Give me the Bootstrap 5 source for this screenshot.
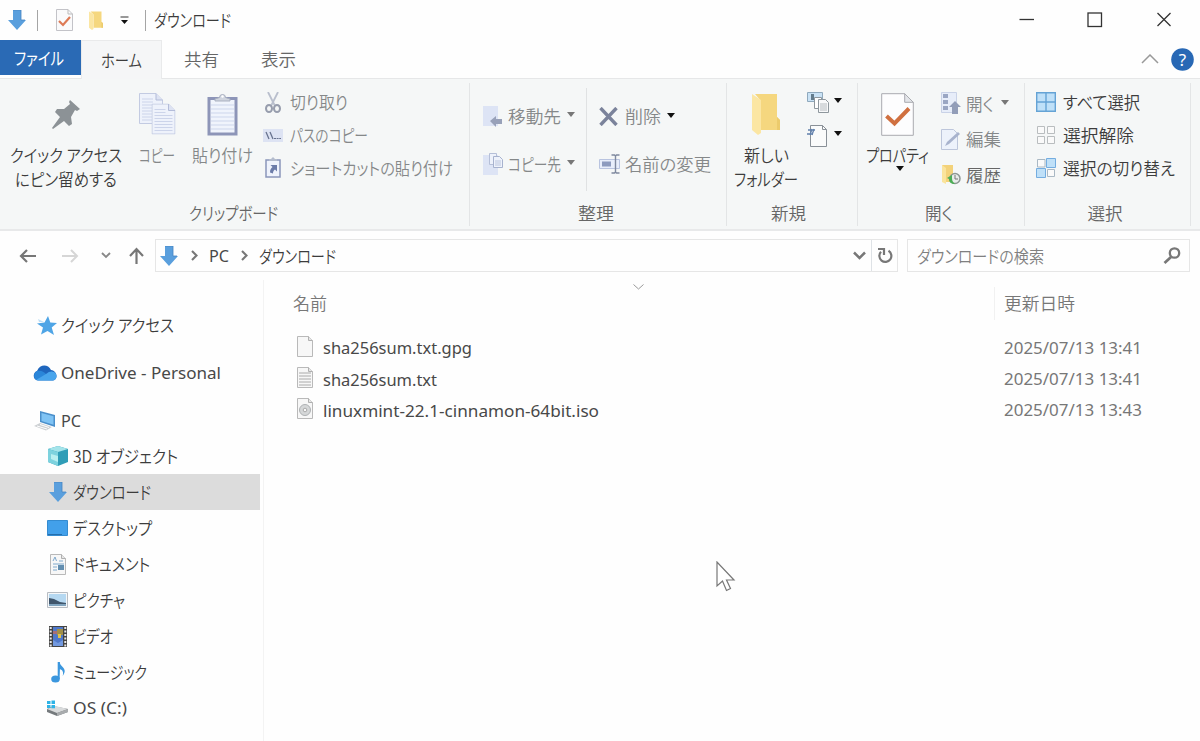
<!DOCTYPE html>
<html lang="ja">
<head>
<meta charset="utf-8">
<title>ダウンロード</title>
<meta name="viewport" content="width=device-width, initial-scale=1">
<link href="https://cdn.jsdelivr.net/npm/bootstrap@5.3.0/dist/css/bootstrap.min.css" rel="stylesheet">
<style>
body{font-family:"Noto Sans","Noto Sans CJK JP",sans-serif;font-size:17.5px;line-height:24px;color:#3c3c3c;background:#fefefe;height:741px;overflow:hidden}
svg{display:block;flex:none}
.t{display:inline-block;white-space:nowrap;flex:none;text-align:left;font-family:"Noto Sans CJK JP",sans-serif;font-feature-settings:"palt";font-weight:350}
.t span{display:inline-block;transform-origin:0 50%}
.lat{font-family:"Noto Sans",sans-serif;font-weight:400;font-size:16.6px;color:#484848}
.titlebar{height:40px}
.vbar{width:1px;height:21px;background:#a5a5a5}
.tabs{height:39px;border-bottom:1px solid #e6e7e8}
.tab-file{width:81px;height:35px;background:#2a6ab5;color:#fff;padding-left:14px}
.tab-on{width:81px;height:39px;background:#f5f6f7;border:1px solid #e9eaeb;border-bottom:0;padding-left:19px}
.tab-file .t{font-weight:400}
.ribbon{height:152px;background:#f5f7f7;border-bottom:2px solid #e8e9ea}
.grp{border-right:1px solid #e3e5e6;margin:4px 0 3px}
.grp-body{height:118px}
.grp-label{height:25px;color:#666}
.g1{width:470px}.g2{width:257px}.g3{width:131px}.g4{width:167px}.g5{width:166px}
.big{padding-top:10px}
.big .ic{height:42px;margin-bottom:8px}
.dis{color:#858889}
.cmds{padding-top:3px}
.cmd{height:32.7px}
.ico{width:20px;display:flex;justify-content:center;flex:none}
.caret{width:0;height:0;border:4.5px solid transparent;border-top:5px solid #111;border-bottom:0;flex:none}
.caret.g{border-top-color:#777}
.inner-sep{width:1px;height:103px;margin-top:5px;background:#e0e2e3}
.navrow{height:49px}
.box{height:33px;border:1px solid #e6e6e6;background:#fefefe}
.side{width:264px;border-right:1px solid #f3f3f3;padding-top:21px}
.side-top{height:48px}
.child{height:36px;padding-left:47px;width:260px}
.child.on{background:#dcdcdc}
.child .ico{width:21px;margin-right:5px}
.side-top .ico{width:24px;margin-right:4px}
.frow{height:31.4px}
.date{color:#777}
.cursor{position:absolute;left:716px;top:561px}
</style>
</head>
<body class="d-flex flex-column position-relative">
<svg width="0" height="0" class="position-absolute">
<defs>
<symbol id="down" viewBox="0 0 18 20"><path d="M5 0h8v10h5L9 20 0 10h5z" fill="#5a9fdd"/><path d="M5 0h8v10h4" fill="none" stroke="#4583c2" stroke-width=".8"/></symbol>
<symbol id="prop" viewBox="0 0 33 43"><path d="M.7.7h23l8.6 8.6v33H.7z" fill="#fdfdfe" stroke="#a9abb0"/><path d="M23.700.7v8.600h8.600z" fill="#e4e6ea" stroke="#a9abb0"/><path d="M5.500 23l8 7.500L28 15.500" fill="none" stroke="#d07040" stroke-width="4"/></symbol>
<symbol id="folder" viewBox="0 0 28 42"><path d="M3 1h22v23l3 3v10H9V8z" fill="#f5d77f"/><path d="M0 1l9 6v33l-3 2-6-5z" fill="#fbe6a3"/><path d="M25 24l3 3v10h-3z" fill="#eccb6c"/></symbol>
<symbol id="lines" viewBox="0 0 24 31"><path d="M.5.500H17L23.500 7v23.500H.500z" fill="#eef2fb" stroke="#c3cbe2"/><path d="M17 .5V7h6.500" fill="#dde3f3" stroke="#b3bcd9"/><path d="M3 6h11M3 9h11M3 12h18M3 15h18M3 18h18M3 21h18M3 24h18M3 27h18" stroke="#ccd4ea"/></symbol>
<symbol id="page" viewBox="0 0 16 21"><path d="M.5.500h11l4 4v16H.500z" fill="#f7f7f7" stroke="#b9b9b9"/><path d="M11.500.5v4h4" fill="#e6e6e6" stroke="#b0b0b0"/></symbol>
</defs>
</svg>

<header class="titlebar d-flex align-items-center justify-content-between">
  <div class="d-flex align-items-center" style="margin-left:8px">
    <svg width="18" height="20"><use href="#down"/></svg>
    <div class="vbar" style="margin-left:11px"></div>
    <svg width="17" height="22" style="margin-left:18px" viewBox="0 0 17 22"><path d="M.500.500H12l4.500 4.500v16.500H.500z" fill="#fafafb" stroke="#c3c3c8"/><path d="M12 .5V5h4.500" fill="none" stroke="#bbb"/><path d="M3 12l4 4 7-8" fill="none" stroke="#dd7a55" stroke-width="2.200"/></svg>
    <svg width="14" height="19" style="margin-left:16px" viewBox="0 0 28 42" preserveAspectRatio="none"><use href="#folder" width="28" height="42"/></svg>
    <svg width="9" height="9" style="margin-left:17px" viewBox="0 0 9 9"><path d="M.5 1h8" stroke="#333"/><path d="M1 4h7L4.500 8z" fill="#111"/></svg>
    <div class="vbar" style="margin-left:16px"></div>
    <span class="t" data-w="77" style="margin-left:8px">ダウンロード</span>
  </div>
  <div class="d-flex align-items-center" style="margin-right:28px">
    <svg width="16" height="16" style="margin-right:52px"><path d="M.5 7.500h14.500" stroke="#333" stroke-width="1.300"/></svg>
    <svg width="16" height="16" style="margin-right:53px"><rect x="1" y="1" width="13.500" height="13.500" fill="none" stroke="#333" stroke-width="1.300"/></svg>
    <svg width="16" height="16"><path d="M1.500 1l13 13M14.500 1l-13 13" stroke="#333" stroke-width="1.300"/></svg>
  </div>
</header>

<nav class="tabs d-flex align-items-start">
  <div class="tab-file d-flex align-items-center"><span class="t" data-w="50">ファイル</span></div>
  <div class="tab-on d-flex align-items-center"><span class="t" data-w="41">ホーム</span></div>
  <div class="d-flex align-items-center h-100" style="margin-left:22px;color:#666;gap:42px"><span class="t" data-w="35">共有</span><span class="t" data-w="35">表示</span></div>
  <div class="d-flex align-items-center ms-auto h-100" style="margin-right:6px">
    <svg width="18" height="10" style="margin-right:12px"><path d="M1 9l8-8 8 8" fill="none" stroke="#999" stroke-width="1.500"/></svg>
    <svg width="23" height="23"><circle cx="11.500" cy="11.500" r="11.300" fill="#2868b5"/><text x="11.500" y="17.500" text-anchor="middle" font-size="17" fill="#fff" font-family="Noto Sans">?</text></svg>
  </div>
</nav>

<section class="ribbon d-flex">
  <div class="grp g1">
    <div class="grp-body d-flex">
      <div class="big d-flex flex-column align-items-center" style="width:132px">
        <div class="ic d-flex align-items-center"><svg width="30" height="31" viewBox="0 0 30 31"><path d="M19 1l10 9-3 2-2-1-4 7 1 7-3 2-5-5L2 30l-1-1 8-11-5-5 2-3h7l6-5-1-2z" fill="#8c9296"/></svg></div>
        <span class="t" data-w="112">クイック アクセス</span><span class="t" data-w="102">にピン留めする</span>
      </div>
      <div class="big dis d-flex flex-column align-items-center" style="width:50px">
        <div class="ic"><svg width="37" height="42"><use href="#lines" width="24" height="31"/><use href="#lines" x="12.500" y="10.500" width="24" height="31"/></svg></div>
        <span class="t" data-w="36">コピー</span>
      </div>
      <div class="big dis d-flex flex-column align-items-center" style="width:81px">
        <div class="ic"><svg width="31" height="43" viewBox="0 0 31 43"><path d="M2 5.500h27V41H2z" fill="#f0f4fc" stroke="#8d95b8" stroke-width="3"/><path d="M4 12h23M4 16h23M4 20h23M4 24h23M4 28h23M4 32h23M4 36h23" stroke="#cdd6ec"/><path d="M8 8V6l4.500-1.500a3 3 0 016 0L23 6v2z" fill="#cfd4de" stroke="#a9b0c0"/><circle cx="15.500" cy="3.500" r="1.200" fill="#fff"/></svg></div>
        <span class="t" data-w="61">貼り付け</span>
      </div>
      <div class="cmds dis">
        <div class="cmd d-flex align-items-center"><span class="ico" style="margin-right:7px"><svg width="16" height="21" viewBox="0 0 16 21"><path d="M3 0l6.500 13M13 0L6.500 13" stroke="#b9bfcd" stroke-width="1.800"/><ellipse cx="4" cy="16.500" rx="3" ry="3.500" fill="none" stroke="#979dad" stroke-width="2"/><ellipse cx="12" cy="16.500" rx="3" ry="3.500" fill="none" stroke="#979dad" stroke-width="2"/></svg></span><span class="t" data-w="58">切り取り</span></div>
        <div class="cmd d-flex align-items-center"><span class="ico" style="margin-right:7px"><svg width="20" height="13"><path d="M0 0h20v13H0z" fill="#dde3f3"/><path d="M3 3l3 7M7 3l3 7" stroke="#68738f" stroke-width="1.300"/><path d="M11 9.500h7" stroke="#68738f" stroke-dasharray="2 .6"/></svg></span><span class="t" data-w="78">パスのコピー</span></div>
        <div class="cmd d-flex align-items-center"><span class="ico" style="margin-right:7px"><svg width="16" height="21"><path d="M1 3h14v17H1z" fill="#eff3fc" stroke="#8b96ba" stroke-width="1.500"/><path d="M4 4V2h2l2-2 2 2h2v2z" fill="#b4bccd"/><path d="M5.500 8H12v6.500l-2-2c-1.500 1-2 2-2 4l-3-1c0-3 1-4 2.500-5.500z" fill="#6c7ca9"/></svg></span><span class="t" data-w="163">ショートカットの貼り付け</span></div>
      </div>
    </div>
    <div class="grp-label text-center" style="padding-right:3px"><span class="t" data-w="89">クリップボード</span></div>
  </div>

  <div class="grp g2">
    <div class="grp-body d-flex dis">
      <div style="width:116px;padding:9px 0 0 12.500px">
        <div class="d-flex align-items-center" style="height:48px"><svg width="20" height="21" style="margin-right:5px"><path d="M0 0h15v20H0z" fill="#dde4f5"/><path d="M7 15l6-5v3h6v5h-6v3z" fill="#98a1b9"/></svg><span class="t" data-w="53">移動先</span><i class="caret g" style="margin:-4px 0 0 6px"></i></div>
        <div class="d-flex align-items-center" style="height:48px"><svg width="20" height="23"><path d="M0 2h15v20H0z" fill="#dde4f5"/><path d="M6.500.500h7v11h-7z" fill="#eef2fb" stroke="#b5bfd8"/><path d="M10.500 3.500h6l3 3v8h-9z" fill="#eef2fb" stroke="#a7b2ce"/><path d="M12 8h6M12 10h6M12 12h6" stroke="#bcc6de"/></svg><span class="t" data-w="53" style="margin-left:5px">コピー先</span><i class="caret g" style="margin:-4px 0 0 6px"></i></div>
      </div>
      <div class="inner-sep"></div>
      <div style="padding:9px 0 0 12px">
        <div class="d-flex align-items-center" style="height:48px"><svg width="20" height="19" style="margin-right:6px"><path d="M1.500 1l16 17M17.500 1l-16 17" stroke="#7b839b" stroke-width="3.400"/></svg><span class="t" data-w="36">削除</span><i class="caret" style="margin:-2px 0 0 6px"></i></div>
        <div class="d-flex align-items-center" style="height:48px"><svg width="21" height="20" style="margin-right:5px"><path d="M.5 5.500h20v9H.500z" fill="#e8eefb" stroke="#b9c4e0"/><path d="M3 7.500h9v5H3z" fill="#8d9bbf"/><path d="M12.500 1h3l1 1 1-1h3M16.500 2v16M12.500 19h3l1-1 1 1h3" fill="none" stroke="#7f899f" stroke-width="1.400"/></svg><span class="t" data-w="86">名前の変更</span></div>
      </div>
    </div>
    <div class="grp-label text-center" style="padding-right:5px"><span class="t" data-w="36">整理</span></div>
  </div>

  <div class="grp g3">
    <div class="grp-body d-flex">
      <div class="big d-flex flex-column align-items-center" style="width:78px">
        <div class="ic"><svg width="28" height="42"><use href="#folder"/></svg></div>
        <span class="t" data-w="45">新しい</span><span class="t" data-w="64">フォルダー</span>
      </div>
      <div class="cmds" style="padding-left:2px">
        <div class="cmd d-flex align-items-center"><svg width="23" height="23"><path d="M.5 1.500h15v9H.500z" fill="#c9e2f5" stroke="#8fa9bd"/><path d="M4 3h3v6H4z" fill="#647c8c"/><path d="M7.500 6.500h7v11h-7z" fill="#fff" stroke="#8e979d"/><path d="M11.500 8.500h7l3 3v10h-10z" fill="#f8f9fa" stroke="#8e979d"/><path d="M13 13h7M13 15h7M13 17h7M13 19h7" stroke="#b6bcc0"/></svg><i class="caret" style="margin:-3px 0 0 4px"></i></div>
        <div class="cmd d-flex align-items-center"><svg width="23" height="23"><path d="M3.500 1.500h12l4 4v17h-16z" fill="#fafbfb" stroke="#899097"/><path d="M15.500 1.500v4h4" fill="none" stroke="#899097"/><path d="M1 6h7M0 10h6M3 11l2-6M5 11l2-6" stroke="#6281ad" stroke-width="1.300"/></svg><i class="caret" style="margin:-3px 0 0 4px"></i></div>
      </div>
    </div>
    <div class="grp-label text-center" style="padding-right:7px"><span class="t" data-w="35">新規</span></div>
  </div>

  <div class="grp g4">
    <div class="grp-body d-flex">
      <div class="big d-flex flex-column align-items-center" style="width:79px">
        <div class="ic"><svg width="33" height="43"><use href="#prop"/></svg></div>
        <span class="t" data-w="63">プロパティ</span><i class="caret" style="margin:-1px 0 0 5px"></i>
      </div>
      <div style="padding:3px 0 0 4px">
        <div class="d-flex align-items-center dis" style="height:35.500px"><svg width="20" height="23" style="margin-right:5px"><path d="M.5.500h15v20H.500z" fill="#e7edf9" stroke="#c9d2e7"/><path d="M2 2h5v4H2zM2 8h5v4H2zM2 14h5v4H2z" fill="#9aa6c3"/><path d="M14 9l6 6h-3v7h-6v-7H8z" fill="#929db8"/></svg><span class="t" data-w="28">開く</span><i class="caret g" style="margin:-3px 0 0 7px"></i></div>
        <div class="d-flex align-items-center dis" style="height:35.500px"><svg width="20" height="21" style="margin-right:5px"><path d="M.5.500h12l4 4v16H.500z" fill="#edf2fb" stroke="#bdc6db"/><path d="M4 17l2-4L17 3l2 2L8 15z" fill="#a8b3cd"/></svg><span class="t" data-w="35">編集</span></div>
        <div class="d-flex align-items-center" style="height:35.500px;color:#666"><svg width="20" height="20" style="margin-right:5px"><path d="M1 0h11v17H4z" fill="#f3d27a"/><path d="M1 0l4 3v16l-4-2z" fill="#fae49d"/><circle cx="14" cy="13.500" r="5" fill="#e9eceb" stroke="#8d9794" stroke-width="1.500"/><path d="M14 10v4h3" fill="none" stroke="#777"/><path d="M6 13l5-3v3c0 3 1 4 3 6-4 0-6-2-6-5z" fill="#4cae55"/></svg><span class="t" data-w="35">履歴</span></div>
      </div>
    </div>
    <div class="grp-label text-center" style="padding-right:4px"><span class="t" data-w="28">開く</span></div>
  </div>

  <div class="grp g5">
    <div class="grp-body">
      <div class="cmds" style="padding-left:11px">
        <div class="cmd d-flex align-items-center"><svg width="20" height="20" style="margin-right:7px"><path d="M.7.700h18.600v18.600H.700zM10 .7v18.600M.7 10h18.600" fill="#bfe0f8" stroke="#65a3d5" stroke-width="1.400"/></svg><span class="t" data-w="77">すべて選択</span></div>
        <div class="cmd d-flex align-items-center"><svg width="20" height="20" style="margin-right:7px"><path d="M1.500 1.500H8.500V8.500H1.500zM11.500 1.500H18.500V8.500h-7zM1.500 11.500H8.500V18.500H1.500zM11.500 11.500H18.500V18.500h-7z" fill="#fafafa" stroke="#b9bdbf"/></svg><span class="t" data-w="71">選択解除</span></div>
        <div class="cmd d-flex align-items-center"><svg width="20" height="20" style="margin-right:7px"><path d="M1.500 1.500H9V9H1.500zM11.500 11.500H18.500V18.500h-7z" fill="#fafafa" stroke="#a9b8c4"/><path d="M10.500.500h9v9h-9zM.5 10.500h9v9h-9z" fill="#bfe0f8" stroke="#74ade0"/></svg><span class="t" data-w="112">選択の切り替え</span></div>
      </div>
    </div>
    <div class="grp-label text-center" style="padding-right:5px"><span class="t" data-w="35">選択</span></div>
  </div>
</section>

<div class="navrow d-flex align-items-center">
  <div class="d-flex align-items-center" style="width:155px;padding-left:19px">
    <svg width="17" height="14" style="margin-right:26px"><path d="M17 7H2M8 1L2 7l6 6" fill="none" stroke="#777" stroke-width="2.200"/></svg>
    <svg width="17" height="14" style="margin-right:22px"><path d="M0 7h15M9 1l6 6-6 6" fill="none" stroke="#d6d6d6" stroke-width="2"/></svg>
    <svg width="10" height="7" style="margin-right:18px"><path d="M1 1l4 4 4-4" fill="none" stroke="#888" stroke-width="1.900"/></svg>
    <svg width="15" height="17"><path d="M7.500 17V2M1 9l6.500-7L14 9" fill="none" stroke="#777" stroke-width="2.200"/></svg>
  </div>
  <div class="box d-flex align-items-center" style="width:743px;padding-left:4px">
    <svg width="18" height="20" style="margin-right:13px"><use href="#down"/></svg>
    <svg width="7" height="11" style="margin-right:11px"><path d="M1 1l4.500 4.500L1 10" fill="none" stroke="#777" stroke-width="2.100"/></svg>
    <span class="t lat" data-w="20">PC</span>
    <svg width="7" height="11" style="margin:0 11px 0 12px"><path d="M1 1l4.500 4.500L1 10" fill="none" stroke="#777" stroke-width="2.100"/></svg>
    <span class="t" data-w="77">ダウンロード</span>
    <svg width="13" height="9" class="ms-auto" style="margin-right:5px"><path d="M1 1.500l5.500 5.500L12 1.500" fill="none" stroke="#777" stroke-width="2.500"/></svg>
    <div class="border-start h-100 d-flex align-items-center justify-content-center" style="width:26px"><svg width="16" height="17" viewBox="0 0 16 17"><path d="M11.500 3.800a6 6 0 11-7.500 1" fill="none" stroke="#777" stroke-width="2.200"/><path d="M1 2h6v6" fill="none" stroke="#777" stroke-width="2.200"/></svg></div>
  </div>
  <div class="box d-flex align-items-center justify-content-between" style="width:283px;margin-left:9px;padding:0 8px 0 9px;color:#808080">
    <span class="t" data-w="127">ダウンロードの検索</span>
    <svg width="18" height="17"><circle cx="11.500" cy="6" r="4.700" fill="none" stroke="#777" stroke-width="2.300"/><path d="M8 10l-6.500 6" stroke="#777" stroke-width="2.700"/></svg>
  </div>
</div>

<main class="d-flex flex-grow-1">
  <aside class="side">
    <div class="side-top d-flex align-items-center" style="padding-left:33px"><span class="ico justify-content-end"><svg width="20" height="19" viewBox="0 0 20 19"><path d="M11 0l2.300 6.500L20 7l-5.300 4.500L17 19l-6.500-4L4 18.500l2-7L0 7.500l7.500-1z" fill="#4fa5e6"/><path d="M1 3l6 3-5 0z" fill="#bfe0f6"/></svg></span><span class="t" data-w="113">クイック アクセス</span></div>
    <div class="side-top d-flex align-items-center" style="padding-left:33px"><span class="ico"><svg width="24" height="16" viewBox="0 0 24 16"><path d="M5 15.500C0 15.500-1 8 4 6 7-1 15-1 18 5c7 1 7 10 2 10.500z" fill="#1f66bd"/><path d="M4 6c4-1 7 1 9 3l8 6H5C0 15 0 8 4 6z" fill="#2a86d9"/><path d="M3 15l10-6c3-3 6-3 8-2 4 2 3 8-1 8.500H5z" fill="#49a5ec"/></svg></span><span class="t lat" data-w="160">OneDrive - Personal</span></div>
    <div class="d-flex align-items-center side-top" style="height:41px;padding:6px 0 0 33px"><span class="ico"><svg width="22" height="20" viewBox="0 0 22 20"><path d="M6 0l15 4v12L6 11z" fill="#4a8fcb"/><path d="M7.500 2l12 3.200v8.500l-12-3.700z" fill="#7fc3f4"/><path d="M0 15l6-3 12 4-6 3.500z" fill="#cdd0d3"/><path d="M3 15l10 3M6 13.500l9 3" stroke="#fff"/></svg></span><span class="t lat" data-w="20">PC</span></div>
    <div class="child d-flex align-items-center"><span class="ico"><svg width="20" height="20" viewBox="0 0 20 20"><path d="M10 0l10 3v13l-10 4-10-4V3z" fill="#2f9db7"/><path d="M10 0l10 3-10 3L0 3z" fill="#a4e4ea"/><path d="M0 3l10 3v14L0 16z" fill="#7dd2de"/><path d="M3 8l7 2v6l-7-3z" fill="#b9eff0"/></svg></span><span class="t" data-w="105">3D オブジェクト</span></div>
    <div class="child on d-flex align-items-center"><span class="ico"><svg width="18" height="20"><use href="#down"/></svg></span><span class="t" data-w="78">ダウンロード</span></div>
    <div class="child d-flex align-items-center"><span class="ico"><svg width="21" height="16"><path d="M.5.500h20v15H.500z" fill="#42a0ea" stroke="#348bd0"/><path d="M1 14.500h14" stroke="#246eac"/></svg></span><span class="t" data-w="79">デスクトップ</span></div>
    <div class="child d-flex align-items-center"><span class="ico"><svg width="16" height="21"><use href="#page"/><path d="M3 7l2-4 1.500 4M9 7h4M3 10h11M3 13h4M3 16h4" fill="none" stroke="#7fa9cd"/><path d="M8 11h6v5H8z" fill="#628eb0"/></svg></span><span class="t" data-w="77">ドキュメント</span></div>
    <div class="child d-flex align-items-center"><span class="ico"><svg width="21" height="16"><path d="M.5.500h20v15H.500z" fill="#f5f7f9" stroke="#b7bcc2"/><path d="M2 2h17v12H2z" fill="#b5d8f1"/><path d="M2 6l5 1 6 3 6 1v1H2z" fill="#40566c"/><path d="M2 12h17v2H2z" fill="#7fa3be"/></svg></span><span class="t" data-w="52">ピクチャ</span></div>
    <div class="child d-flex align-items-center"><span class="ico"><svg width="18" height="21"><path d="M0 0h18v21H0z" fill="#444"/><path d="M4 1h10v19H4z" fill="#4f78ca"/><path d="M8 3h6v6H8z" fill="#a1904a"/><path d="M4 5h4v3H4z" fill="#a76f7a"/><path d="M9 8h3v4H9z" fill="#e1c34a"/><path d="M4 14l5 3 5-3v6H4z" fill="#7299df"/><path d="M1.700 1v20M16.300 1v20" stroke="#e8e8e8" stroke-width="2" stroke-dasharray="2 1.500"/></svg></span><span class="t" data-w="40">ビデオ</span></div>
    <div class="child d-flex align-items-center"><span class="ico"><svg width="14" height="22"><ellipse cx="4.500" cy="18" rx="4.300" ry="3.500" fill="#3b97de"/><path d="M7.700 18V1h1c0 4 5 5 5 9 0 2-1 3-2 5 1-4 0-6-3-7" fill="#3b97de"/><path d="M7.700 18V1" stroke="#3b97de" stroke-width="2"/></svg></span><span class="t" data-w="74">ミュージック</span></div>
    <div class="child d-flex align-items-center"><span class="ico"><svg width="21" height="16" viewBox="0 0 21 16"><path d="M0 9l6-3 15 3v3l-11 4L0 12z" fill="#757a7d"/><path d="M0 9l8-3 13 3-11 4z" fill="#d9dbdc"/><path d="M10 13l11-4v3l-11 4z" fill="#a9acae"/><path d="M0 1h3.500v3H0zM4.500.600H8V4H4.500zM0 5h3.500v3H0zM4.500 5H8v3.300H4.500z" fill="#2eb3e6"/></svg></span><span class="t lat" data-w="54">OS (C:)</span></div>
  </aside>

  <section class="flex-grow-1">
    <div class="d-flex" style="height:48px;color:#777">
      <div class="d-flex justify-content-between" style="width:731px;padding-left:29px;border-right:1px solid #f1f1f1;margin-top:7px;height:33px">
        <span class="t" data-w="34" style="margin-top:4px">名前</span>
        <svg width="11" height="6" style="margin:-3px 350px 0 0"><path d="M.5.500l5 4.500 5-4.500" fill="none" stroke="#999"/></svg>
      </div>
      <span class="t" data-w="71" style="margin:11px 0 0 9px">更新日時</span>
    </div>
    <div style="padding:4px 0 0 33px">
      <div class="frow d-flex align-items-center"><svg width="16" height="21" style="margin:-3px 10px 0 0"><use href="#page"/></svg><div style="width:681px"><span class="t lat" data-w="149">sha256sum.txt.gpg</span></div><span class="t lat date" data-w="138">2025/07/13 13:41</span></div>
      <div class="frow d-flex align-items-center"><svg width="16" height="21" style="margin:-3px 10px 0 0"><use href="#page"/><path d="M2 6h12M2 9h12M2 12h12M2 15h12M2 18h12" stroke="#aaa"/></svg><div style="width:681px"><span class="t lat" data-w="114">sha256sum.txt</span></div><span class="t lat date" data-w="138">2025/07/13 13:41</span></div>
      <div class="frow d-flex align-items-center"><svg width="16" height="21" style="margin:-3px 10px 0 0"><use href="#page"/><circle cx="8" cy="12" r="5.500" fill="#d5d7d8" stroke="#aeb1b3"/><circle cx="8" cy="12" r="1.800" fill="#f8f8f8" stroke="#aaa"/></svg><div style="width:681px"><span class="t lat" data-w="276">linuxmint-22.1-cinnamon-64bit.iso</span></div><span class="t lat date" data-w="138">2025/07/13 13:43</span></div>
    </div>
  </section>
</main>
<svg class="cursor" width="20" height="31" viewBox="0 0 20 31"><path d="M1 1v24l5.500-5 4 9.500 4-2-4-8.500H18z" fill="#fff" stroke="#777" stroke-width="1.200"/></svg>

<script src="https://cdn.jsdelivr.net/npm/bootstrap@5.3.0/dist/js/bootstrap.bundle.min.js"></script>
<script>
// Condense each label to its set width, as a narrow UI kana face would.
document.querySelectorAll('.t[data-w]').forEach(function (el) {
  var w = +el.dataset.w, natural = el.getBoundingClientRect().width;
  var inner = document.createElement('span');
  inner.textContent = el.textContent;
  inner.style.transform = 'scaleX(' + (w / natural) + ')';
  el.textContent = '';
  el.style.width = w + 'px';
  el.appendChild(inner);
});
</script>
</body>
</html>
